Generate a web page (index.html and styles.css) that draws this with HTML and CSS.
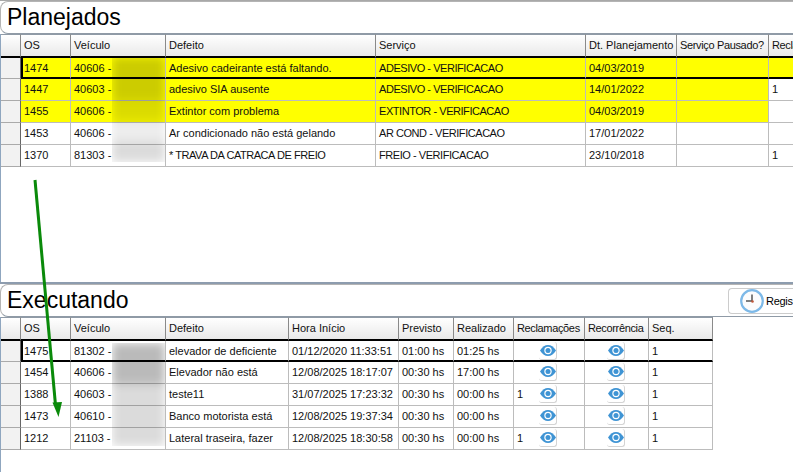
FILE: index.html
```html
<!DOCTYPE html>
<html lang="pt-BR">
<head>
<meta charset="utf-8">
<title>Planejados e Executando</title>
<link rel="stylesheet" href="styles.css">
</head>
<body>
<svg width="0" height="0" class="defs"><defs>
<symbol id="eye" viewBox="0 0 16 11"><path fill="#3f94d4" d="M0 5.500C2.500 1.800 5 0 8 0s5.500 1.800 8 5.500c-2.500 3.700-5 5.500-8 5.500S2.500 9.200 0 5.500z"/><circle cx="8" cy="5.500" r="3.700" fill="#fff"/><circle cx="8" cy="5.500" r="2.500" fill="#3f94d4"/></symbol>
</defs></svg>
<section class="panel panel-top">
  <header class="title"><h1>Planejados</h1></header>
  <div class="grid">
    <table class="plan">
      <colgroup><col class="c20"><col class="c50"><col class="c95"><col class="c210"><col class="c210"><col class="c91"><col class="c92"><col class="c80"></colgroup>
      <thead><tr><th></th><th>OS</th><th>Veículo</th><th>Defeito</th><th>Serviço</th><th>Dt. Planejamento</th><th class="tight">Serviço Pausado?</th><th class="tight">Reclamações</th></tr></thead>
      <tbody>
        <tr class="sel warn"><td class="rh"></td><td>1474</td><td>40606 -</td><td>Adesivo cadeirante está faltando.</td><td class="up">ADESIVO - VERIFICACAO</td><td>04/03/2019</td><td></td><td></td></tr>
        <tr class="warn"><td class="rh"></td><td>1447</td><td>40603 -</td><td>adesivo SIA ausente</td><td class="up">ADESIVO - VERIFICACAO</td><td>14/01/2022</td><td></td><td class="plain">1</td></tr>
        <tr class="warn"><td class="rh"></td><td>1455</td><td>40606 -</td><td>Extintor com problema</td><td class="up">EXTINTOR - VERIFICACAO</td><td>04/03/2019</td><td></td><td class="plain"></td></tr>
        <tr><td class="rh"></td><td>1453</td><td>40606 -</td><td>Ar condicionado não está gelando</td><td class="up">AR COND - VERIFICACAO</td><td>17/01/2022</td><td></td><td></td></tr>
        <tr><td class="rh"></td><td>1370</td><td>81303 -</td><td class="up">* TRAVA DA CATRACA DE FREIO</td><td class="up">FREIO - VERIFICACAO</td><td>23/10/2018</td><td></td><td>1</td></tr>
      </tbody>
    </table>
    <div class="smear smear-top"><div class="smear-in"><i class="d3"></i><i class="d3"></i><i class="d2"></i><i class="d1"></i><i class="d2"></i></div></div>
  </div>
</section>
<section class="panel panel-bottom">
  <header class="title">
    <h1>Executando</h1>
    <div class="tool">
      <svg class="clock" width="24" height="24" viewBox="0 0 24 24"><circle cx="12" cy="12" r="10.800" fill="#fbfcfd" stroke="#7db9e8" stroke-width="2.200"/><path d="M12 5.500V12H6" fill="none" stroke="#555" stroke-width="1.500"/><circle cx="12.500" cy="12.500" r="1.300" fill="#c0573a"/></svg>
      <span>Regis</span>
    </div>
  </header>
  <div class="grid">
    <table class="exec">
      <colgroup><col class="c20"><col class="c50"><col class="c95"><col class="c123"><col class="c110"><col class="c55"><col class="c60"><col class="c71"><col class="c64"><col class="c64"></colgroup>
      <thead><tr><th></th><th>OS</th><th>Veículo</th><th>Defeito</th><th>Hora Início</th><th>Previsto</th><th>Realizado</th><th class="tight">Reclamações</th><th class="tight">Recorrência</th><th>Seq.</th></tr></thead>
      <tbody>
        <tr class="sel"><td class="rh"></td><td>1475</td><td>81302 -</td><td>elevador de deficiente</td><td>01/12/2020 11:33:51</td><td>01:00 hs</td><td>01:25 hs</td><td class="ic"><span class="eyebtn"><svg width="16" height="11"><use href="#eye"/></svg></span></td><td class="ic mid"><span class="eyebtn"><svg width="16" height="11"><use href="#eye"/></svg></span></td><td>1</td></tr>
        <tr><td class="rh"></td><td>1454</td><td>40606 -</td><td>Elevador não está</td><td>12/08/2025 18:17:07</td><td>00:30 hs</td><td>17:00 hs</td><td class="ic"><span class="eyebtn"><svg width="16" height="11"><use href="#eye"/></svg></span></td><td class="ic mid"><span class="eyebtn"><svg width="16" height="11"><use href="#eye"/></svg></span></td><td>1</td></tr>
        <tr><td class="rh"></td><td>1388</td><td>40603 -</td><td>teste11</td><td>31/07/2025 17:23:32</td><td>00:30 hs</td><td>00:00 hs</td><td class="ic">1<span class="eyebtn"><svg width="16" height="11"><use href="#eye"/></svg></span></td><td class="ic mid"><span class="eyebtn"><svg width="16" height="11"><use href="#eye"/></svg></span></td><td>1</td></tr>
        <tr><td class="rh"></td><td>1473</td><td>40610 -</td><td>Banco motorista está</td><td>12/08/2025 19:37:34</td><td>00:30 hs</td><td>00:00 hs</td><td class="ic"><span class="eyebtn"><svg width="16" height="11"><use href="#eye"/></svg></span></td><td class="ic mid"><span class="eyebtn"><svg width="16" height="11"><use href="#eye"/></svg></span></td><td>1</td></tr>
        <tr><td class="rh"></td><td>1212</td><td>21103 -</td><td>Lateral traseira, fazer</td><td>12/08/2025 18:30:58</td><td>00:30 hs</td><td>00:00 hs</td><td class="ic">1<span class="eyebtn"><svg width="16" height="11"><use href="#eye"/></svg></span></td><td class="ic mid"><span class="eyebtn"><svg width="16" height="11"><use href="#eye"/></svg></span></td><td>1</td></tr>
      </tbody>
    </table>
    <div class="smear smear-bottom"><div class="smear-in"><i class="d4"></i><i class="d4"></i><i class="d2"></i><i class="d2"></i><i class="d2"></i></div></div>
  </div>
</section>
<svg class="arrow" width="793" height="472" viewBox="0 0 793 472"><path d="M35 180 55.500 405" fill="none" stroke="#0a8a0a" stroke-width="3"/><path d="M52.500 402.500 62 402 58.500 417z" fill="#0a8a0a"/></svg>
</body>
</html>
```
FILE: styles.css
```css
* { box-sizing: border-box; }
html, body { margin: 0; padding: 0; }
body {
  width: 793px;
  height: 472px;
  overflow: hidden;
  position: relative;
  display: flex;
  flex-direction: column;
  background: #fff;
  font-family: "Liberation Sans", Arial, sans-serif;
  font-size: 11px;
  color: #111;
}
.defs { position: absolute; }
.panel { display: flex; flex-direction: column; min-height: 0; }
.panel-top { height: 282px; border-top: 1px solid #a8a8a8; }
.panel-bottom { flex: 1; border-top: 2px solid #8d9cae; }
.title {
  height: 33px;
  flex: none;
  display: flex;
  align-items: center;
  justify-content: space-between;
  border: 1px solid #b4b4b4;
  border-right: 0;
  border-bottom: 1px solid #8f9aa6;
  border-radius: 8px 0 0 8px;
  padding-left: 6px;
}
.title h1 {
  margin: 0 0 1px;
  font-size: 23px;
  font-weight: 400;
  line-height: 30px;
  color: #000;
}
.grid {
  flex: 1;
  position: relative;
  overflow: hidden;
  border-left: 1px solid #8fa6bf;
}
table { border-collapse: separate; border-spacing: 0; table-layout: fixed; }
.plan { width: 848px; }
.exec { width: 712px; }
.c20 { width: 20px; } .c50 { width: 50px; } .c95 { width: 95px; }
.c210 { width: 210px; } .c91 { width: 91px; } .c92 { width: 92px; } .c80 { width: 80px; }
.c123 { width: 123px; } .c110 { width: 110px; } .c55 { width: 55px; } .c60 { width: 60px; }
.c71 { width: 71px; } .c64 { width: 64px; }
th {
  height: 24px;
  padding: 0 0 1px 3px;
  font-weight: 400;
  text-align: left;
  white-space: nowrap;
  overflow: hidden;
  background: linear-gradient(#ffffff, #e9e9e9);
  border-right: 1px solid #8a8a8a;
  border-top: 1px solid #8f9aa6;
  border-bottom: 2px solid #000;
}
.tight { letter-spacing: -.35px; }
td {
  height: 22px;
  padding: 0 0 1px 3px;
  white-space: nowrap;
  overflow: hidden;
  border-right: 1px solid #bcbcbc;
  border-bottom: 1px solid #bcbcbc;
}
.up { letter-spacing: -.45px; }
.rh { background: #f2f2f2; border-right-color: #666; border-bottom-color: #aaa; }
.warn td { background: #ffff00; }
.warn td.rh { background: #f2f2f2; }
.warn td.plain { background: #fff; }
.sel td { height: 21px; padding-bottom: 0; border-bottom: 2px solid #000; }
.sel td.rh { border-bottom: 1px solid #aaa; }
.sel td:nth-child(2) { border-left: 2px solid #000; padding-left: 1px; }
.ic { position: relative; }
.eyebtn {
  position: absolute;
  left: 25px;
  top: 1px;
  width: 18px;
  height: 18px;
  display: flex;
  align-items: center;
  justify-content: center;
  background: #fff;
  border-right: 1px solid #d4d4d4;
  border-bottom: 1px solid #d4d4d4;
  border-radius: 3px;
}
.mid .eyebtn { left: 22px; }
.smear {
  position: absolute;
  left: 111px;
  width: 53px;
  overflow: hidden;
  pointer-events: none;
}
.smear-top { top: 23px; height: 105px; }
.smear-bottom { top: 26px; height: 103px; }
.smear-in { filter: blur(5px); display: flex; flex-direction: column; height: 100%; }
.smear-in i { display: block; flex: 1; }
.d1 { background: rgba(0, 0, 0, .07); }
.d2 { background: rgba(0, 0, 0, .14); }
.d3 { background: rgba(0, 0, 0, .2); }
.d4 { background: rgba(0, 0, 0, .27); }
.tool {
  flex: none;
  width: 65px;
  height: 26px;
  display: flex;
  align-items: center;
  gap: 2px;
  padding-left: 11px;
  border: 1px solid #ccc;
  border-right: 0;
  border-radius: 4px 0 0 4px;
  font-size: 11px;
  letter-spacing: -.3px;
  color: #000;
}
.clock { flex: none; }
.arrow { position: absolute; left: 0; top: 0; pointer-events: none; }
```
